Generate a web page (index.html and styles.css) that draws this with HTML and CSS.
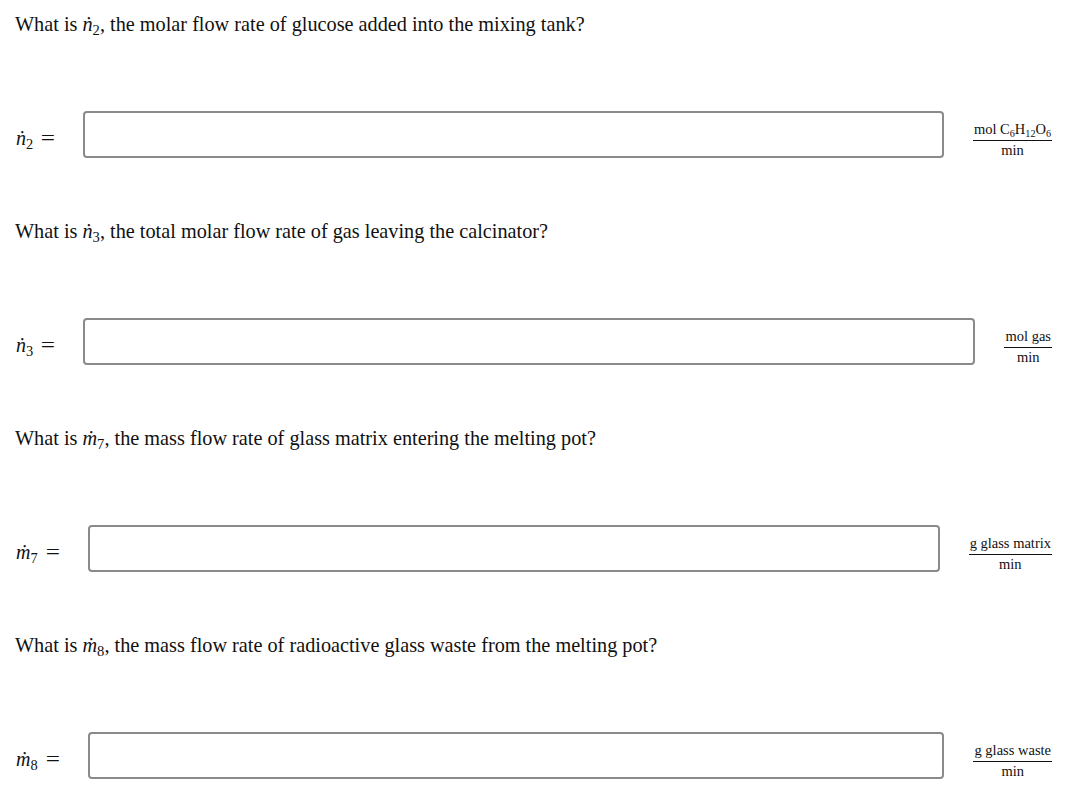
FILE: index.html
```html
<!DOCTYPE html>
<html>
<head>
<meta charset="utf-8">
<link rel="stylesheet" href="styles.css">
</head>
<body>
<div class="page">
  <div class="block">
    <p class="question">What is <span class="var"><i>ṅ</i><sub>2</sub></span>, the molar flow rate of glucose added into the mixing tank?</p>
    <div class="row">
      <span class="label"><i>ṅ</i><sub>2</sub><span class="eq">=</span></span>
      <div class="field"></div>
      <span class="unit"><span class="num">mol C<sub>6</sub>H<sub>12</sub>O<sub>6</sub></span><span class="den">min</span></span>
    </div>
  </div>
  <div class="block">
    <p class="question">What is <span class="var"><i>ṅ</i><sub>3</sub></span>, the total molar flow rate of gas leaving the calcinator?</p>
    <div class="row">
      <span class="label"><i>ṅ</i><sub>3</sub><span class="eq">=</span></span>
      <div class="field"></div>
      <span class="unit"><span class="num">mol gas</span><span class="den">min</span></span>
    </div>
  </div>
  <div class="block">
    <p class="question">What is <span class="var"><i>ṁ</i><sub>7</sub></span>, the mass flow rate of glass matrix entering the melting pot?</p>
    <div class="row">
      <span class="label"><i>ṁ</i><sub>7</sub><span class="eq">=</span></span>
      <div class="field"></div>
      <span class="unit"><span class="num">g glass matrix</span><span class="den">min</span></span>
    </div>
  </div>
  <div class="block">
    <p class="question">What is <span class="var"><i>ṁ</i><sub>8</sub></span>, the mass flow rate of radioactive glass waste from the melting pot?</p>
    <div class="row">
      <span class="label"><i>ṁ</i><sub>8</sub><span class="eq">=</span></span>
      <div class="field"></div>
      <span class="unit"><span class="num">g glass waste</span><span class="den">min</span></span>
    </div>
  </div>
</div>
</body>
</html>
```
FILE: styles.css
```css
html, body {
  margin: 0;
  padding: 0;
  background: #fff;
}
.page {
  font-family: "Liberation Serif", "Times New Roman", serif;
  color: #111;
  padding: 13px 16px 0 15px;
}
.block {
  height: 207px;
}
.question {
  margin: 0;
  font-size: 20.25px;
  line-height: 22px;
}
.var sub, .label sub {
  font-size: 0.72em;
  vertical-align: -0.25em;
  line-height: 0;
}
.row {
  display: flex;
  align-items: center;
  margin-top: 76px;
  height: 47px;
}
.label {
  font-size: 20px;
  padding-left: 1px;
  margin-top: 8px;
  margin-right: 29px;
  flex: none;
  white-space: nowrap;
}
.eq {
  margin-left: 9px;
  font-size: 21px;
  display: inline-block;
  transform: scaleX(1.2);
}
.field {
  flex: 1;
  height: 43px;
  border: 2px solid #8a8a8a;
  border-radius: 4px;
  margin-right: 29px;
}
.unit {
  display: inline-flex;
  flex-direction: column;
  align-items: center;
  font-size: 14.5px;
  line-height: 17px;
  margin-top: 10px;
}
.unit .num {
  border-bottom: 1px solid #111;
  padding: 0 1px 2px;
  white-space: nowrap;
}
.unit .num sub {
  font-size: 0.7em;
  vertical-align: -0.3em;
  line-height: 0;
}
.unit .den {
  padding-top: 1px;
}
```
